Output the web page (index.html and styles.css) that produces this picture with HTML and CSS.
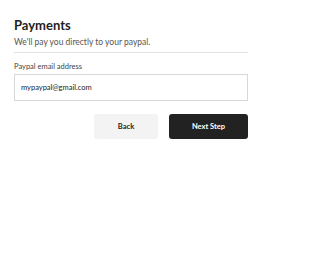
FILE: index.html
```html
<!DOCTYPE html>
<html>
<head>
<meta charset="utf-8">
<link rel="stylesheet" href="styles.css">
</head>
<body>
<div class="page">
  <h1 class="title">Payments</h1>
  <p class="subtitle">We'll pay you directly to your paypal.</p>
  <hr class="divider">
  <label class="label" for="email">Paypal email address</label>
  <div class="input">mypaypal@gmail.com</div>
  <div class="actions">
    <button class="btn btn-back">Back</button>
    <button class="btn btn-next">Next Step</button>
  </div>
</div>
</body>
</html>
```
FILE: styles.css
```css
html, body {
  margin: 0;
  padding: 0;
  background: #ffffff;
}
.page {
  width: 234px;
  padding: 16px 16px 0 14px;
  font-family: Lato, "Liberation Sans", Arial, sans-serif;
  color: #222222;
}
.title {
  margin: 0;
  font-size: 13px;
  font-weight: bold;
  line-height: 18px;
  color: #1f1f1f;
}
.subtitle {
  margin: 2px 0 0 0;
  font-size: 8.5px;
  line-height: 12px;
  color: #555555;
}
.divider {
  margin: 4px 0 0 0;
  border: 0;
  border-top: 1px solid #e2e2e2;
  height: 0;
}
.label {
  display: block;
  margin-top: 9px;
  font-size: 7.5px;
  line-height: 10px;
  color: #444444;
}
.input {
  margin-top: 2px;
  height: 25px;
  border: 1px solid #d8d8d8;
  display: flex;
  align-items: center;
  padding-left: 6px;
  font-size: 7.5px;
  color: #222222;
}
.actions {
  display: flex;
  justify-content: flex-end;
  gap: 11px;
  margin-top: 13px;
}
.btn {
  height: 25px;
  border: 0;
  border-radius: 3px;
  font-family: Lato, "Liberation Sans", Arial, sans-serif;
  font-size: 7.5px;
  font-weight: bold;
  padding: 0;
}
.btn-back {
  width: 64px;
  background: #f3f3f3;
  color: #222222;
}
.btn-next {
  width: 79px;
  background: #222222;
  color: #ffffff;
}
```
